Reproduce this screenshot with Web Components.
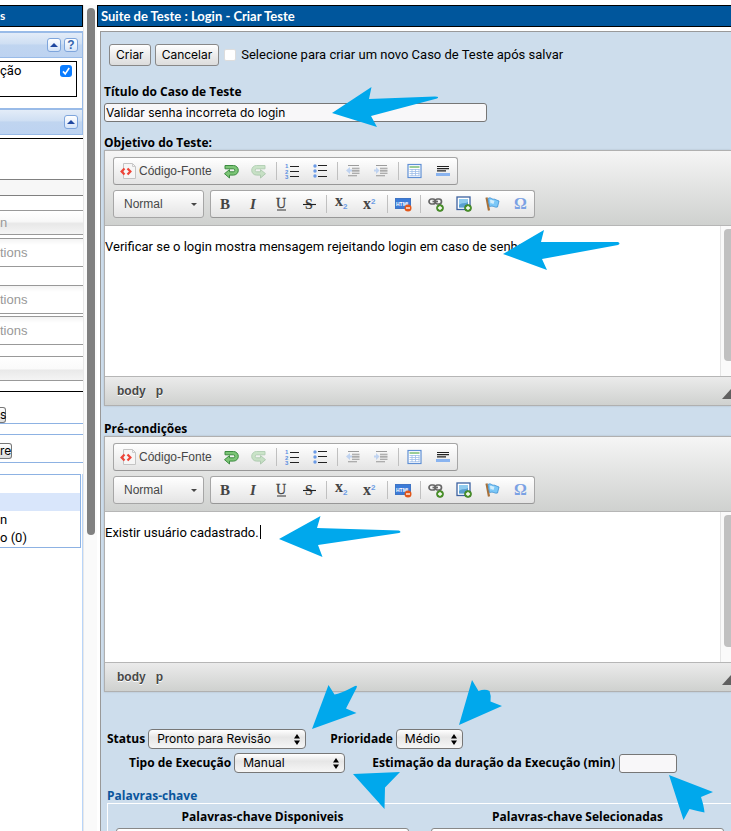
<!DOCTYPE html>
<html lang="pt-BR">
<head>
<meta charset="utf-8">
<title>Criar Teste</title>
<style>
html,body{margin:0;height:100%;overflow:hidden;background:#fff}
</style>
</head>
<body>
<test-app></test-app>

<template id="t-app">
<style>
:host{display:grid;grid-template-columns:83px 14px minmax(0,1fr);height:100vh;overflow:hidden;position:relative;
 font:13px/16px Roboto,"Open Sans",sans-serif;color:#000;background:#fff;box-sizing:border-box;padding-top:5px}
.scroll{background:#fafafa;border-left:1px solid #e8e8e8;padding:3px 2px 0 3px;box-sizing:border-box}
.thumb{height:527px;border-radius:4px;background:#808080}
main{min-width:0}
</style>
<side-panel></side-panel>
<div class="scroll"><div class="thumb"></div></div>
<main><case-form></case-form></main>
<arrow-layer></arrow-layer>
</template>

<template id="t-side">
<style>
:host{display:block;min-width:0;overflow:hidden}
*{box-sizing:border-box}
h2{margin:0;height:22px;background:#00569c;border:1px solid #000;border-left:0;color:#fff;font:bold 12px/20px Lato,sans-serif}
.bar{display:flex;justify-content:flex-end;align-items:center;gap:3px;height:27px;padding-right:4px;
 background:linear-gradient(#e3ecf8,#cfdff3 45%,#c0d5f0 50%,#bdd3f1);border-top:2px solid #99bbe8;border-bottom:1px solid #99bbe8;border-right:1px solid #99bbe8}
.bar.first{margin-top:4px}
.tool{width:14px;height:14px;padding:0;border:1px solid #7ea5dc;border-radius:3px;background:linear-gradient(#fff,#d5e4f8);display:grid;place-items:center;font:bold 12px/12px "Liberation Sans",sans-serif;color:#3464ad}
.box{height:50px;padding:3px 5px 0 0;border-right:1px solid #99bbe8}
.opt{display:flex;justify-content:space-between;height:36px;border:1px solid #000;border-left:0;padding:1px 4px 0 0}
.opt label{flex:1}
.opt input{appearance:none;width:12px;height:12px;margin:2px 0 0;border-radius:3px;background:#0a7cff}
.opt .c{display:grid}
.opt .c>*{grid-area:1/1}
.opt svg{width:12px;height:12px;margin-top:2px;pointer-events:none}
.rule{border-bottom:1px solid #808080}
.f{font:13px/28px "Liberation Sans",sans-serif;color:#999;border:1px solid #999;border-width:1px 0;background:linear-gradient(#f3f3f3,#fff 6px)}
.g{background:linear-gradient(#fff,#f8f8f8 45%,#e8e8e8 55%,#f4f4f4)}
.row{display:flex;align-items:center;border-bottom:1px solid #8db2e3}
.row button{width:12px;height:16px;border:1px solid #777;border-left:0;border-radius:0 3px 3px 0;background:linear-gradient(#fff,#ddd);font:12px/14px Inter,sans-serif;padding:0;color:#000}
.row .n{width:6px}
.tree{margin:11px 0 0;padding:18px 0 0;list-style:none;border:1px solid #8db2e3;border-left:0;margin-right:1px;height:74px}
.tree li{height:18px;line-height:18px}
.tree .sel{background:#d9e6fb}
.rest{border-right:1px solid #b9d5f9;height:100%}
</style>
<h2>s</h2>
<div class="bar first">
 <button class="tool" aria-label="Recolher"><svg width="8" height="4"><path d="M0 4L4 0l4 4z" fill="#2048a0"/></svg></button>
 <button class="tool" aria-label="Ajuda">?</button>
</div>
<div class="box"><div class="opt"><label for="upd">ção</label><span class="c"><input id="upd" type="checkbox" checked><svg viewBox="0 0 12 12"><path d="M3 6.4l2.2 2.5L9.2 3" fill="none" stroke="#fff" stroke-width="1.6"/></svg></span></div></div>
<div class="bar"><button class="tool" aria-label="Recolher"><svg width="8" height="4"><path d="M0 4L4 0l4 4z" fill="#2048a0"/></svg></button></div>
<div style="height:4px;border-bottom:1px solid #000"></div>
<div class="rule" style="height:41px"></div>
<div class="rule" style="height:16px;background:#f7f7f7"></div>
<div style="height:14px"></div>
<div class="f g" style="height:25px;line-height:23px">n</div>
<div class="f" style="height:29px;margin-top:3px">tions</div>
<div class="f" style="height:29px;margin-top:18px">tions</div>
<div class="f" style="height:29px;margin-top:2px">tions</div>
<div class="f" style="height:25px;margin-top:11px;background:linear-gradient(#fff,#fafafa 12px,#e9e9e9 13px,#f4f4f4)"></div>
<div style="height:11px;border-bottom:1px solid #000"></div>
<div class="row" style="height:32px;padding-top:14px"><button class="n">s</button></div>
<div style="height:11px;border-bottom:1px solid #8db2e3"></div>
<div class="row" style="height:28px;padding-top:4px"><button>re</button></div>
<div class="rest"><ul class="tree"><li class="sel"></li><li>n</li><li>o (0)</li></ul></div>
</template>

<template id="t-form">
<style>
:host{display:block}
*{box-sizing:border-box}
h1{margin:0;height:22px;background:#00569c;border:1px solid #000;border-right:0;color:#fff;font:bold 13px/20px Lato,sans-serif;padding-left:3px}
form{margin:4px 0 0 3px;background:#cdddec;border:1px solid #999;border-width:1px 0 0 1px;padding:12px 0 0 3px;height:900px}
label,.lab{font:bold 12px/16px "Open Sans",sans-serif}
.top{display:flex;align-items:center;gap:4px;padding-left:5px;height:22px}
.top button{height:22px;border:1px solid #888;border-radius:3px;background:linear-gradient(#fff,#ececec 50%,#dcdcdc);font:12px/18px Inter,sans-serif;padding:0 6px;color:#000}
.top input{appearance:none;width:12px;height:12px;margin:0 1px 0 1px;background:#fff;border:1px solid #ddd;border-radius:2px}
.top label{font:13px/16px Roboto,sans-serif}
.title{display:block;margin-top:18px}
.txt{height:19px;border:1px solid #767676;border-radius:3px;background:#f8f7f9;font:12px/15px Inter,sans-serif;padding:0 1px;margin:3px 0 0;color:#000}
#ti{display:block;width:383px}
.obj{display:block;margin:13px 0 -1px}
.pre{display:block;margin:15px 0 -1px}
.r{display:flex;align-items:center;gap:4px;height:24px}
.r1{margin:35px 0 0 3px}
.r2{padding-left:25px}
.gap{width:16px}
.r2 .gap{width:19px}
.r2 .txt{margin:0;width:58px}
h3{margin:13px 0 0 3px;font:bold 12px/16px "Open Sans",sans-serif;color:#0a559c}
.kw{border:1px solid #fff;border-right:0;margin-left:3px;margin-top:-1px;padding-left:8px;display:grid;grid-template-columns:293px 293px;gap:22px;height:90px}
.kw label{display:block;text-align:center;margin:5px 0 3px}
.kw select{display:block;width:100%;height:60px;border:1px solid #888;border-radius:3px;background:#fff}
</style>
<h1>Suite de Teste : Login - Criar Teste</h1>
<form>
 <div class="top"><button type="button">Criar</button><button type="button">Cancelar</button><input type="checkbox" id="novo"><label for="novo">Selecione para criar um novo Caso de Teste após salvar</label></div>
 <label class="title" for="ti">Título do Caso de Teste</label>
 <input class="txt" id="ti" type="text" value="Validar senha incorreta do login">
 <span class="lab obj">Objetivo do Teste:</span>
 <rich-editor label="Objetivo do Teste">Verificar se o login mostra mensagem rejeitando login em caso de senha incorreta.</rich-editor>
 <span class="lab pre">Pré-condições</span>
 <rich-editor label="Pré-condições" caret>Existir usuário cadastrado.</rich-editor>
 <div class="r r1"><select-field label="Status" value="Pronto para Revisão" style="--w:158px"></select-field><span class="gap"></span><select-field label="Prioridade" value="Médio" style="--w:67px"></select-field></div>
 <div class="r r2"><select-field label="Tipo de Execução" value="Manual" style="--w:111px"></select-field><span class="gap"></span><label for="est">Estimação da duração da Execução (min)</label><input class="txt" id="est" type="text"></div>
 <h3>Palavras-chave</h3>
 <div class="kw"><div><label for="kd">Palavras-chave Disponiveis</label><select id="kd" multiple></select></div><div><label for="ks">Palavras-chave Selecionadas</label><select id="ks" multiple></select></div></div>
</form>
</template>

<template id="t-select">
<style>
:host{display:flex;align-items:center;gap:3px}
label{font:bold 12px/16px "Open Sans",sans-serif}
.w{display:grid;width:var(--w)}
.w>*{grid-area:1/1}
select{appearance:none;width:100%;height:20px;box-sizing:border-box;margin:0;border:1px solid #777;border-radius:4px;background:linear-gradient(#fff,#e6e6e6 40%,#f6f6f6);padding:0 8px;font:12px/18px Inter,sans-serif;color:#000}
svg{justify-self:end;align-self:center;margin-right:6px;pointer-events:none}
</style>
<label for="s"></label><span class="w"><select id="s"><option></option></select><svg width="6" height="11"><path d="M0 4.5L3 0l3 4.5zM0 6.5L3 11l3-4.5z"/></svg></span>
</template>

<template id="t-editor">
<style>
:host{display:block;border:1px solid #b0b0b0;border-right:0;box-shadow:0 0 2px rgba(0,0,0,.15)}
*{box-sizing:border-box}
.bars{height:75px;padding:6px 0 0 8px;border-bottom:1px solid #b6b6b6;background:linear-gradient(#f5f5f5,#cfd1cf);display:flex;flex-direction:column;gap:5px;align-items:flex-start}
.line{display:flex;gap:6px}
.grp{display:flex;align-items:center;height:28px;border:1px solid #a6a6a6;border-bottom-color:#979797;border-radius:3px;background:linear-gradient(#fff,#e4e4e4);color:#444}
.grp.a{padding-right:1px}
.combo{appearance:none;width:91px;height:28px;border:1px solid #a6a6a6;border-radius:3px;background:linear-gradient(#fff,#e4e4e4);font:12px/26px "Liberation Sans",sans-serif;color:#474747;padding:0 10px;margin:0}
.cw{display:grid}
.cw>*{grid-area:1/1}
.cw svg{justify-self:end;align-self:center;margin-right:7px;pointer-events:none}
.text{height:151px;background:#fff;border-bottom:1px solid #b6b6b6;display:grid;grid-template-columns:minmax(0,1fr) 11px;overflow:hidden}
.ed{padding-top:13px;outline:0;font:13px/16px Roboto,sans-serif;white-space:nowrap;overflow:hidden}
:host([caret]) .ed::after{content:"";display:inline-block;width:1px;height:14px;margin-left:1px;background:#000;vertical-align:-2px}
.sb{background:#fafafa;border-left:1px solid #e5e5e5;padding:3px 0 0 3px}
.sb div{height:132px;border-radius:4px 0 0 4px;background:#c1c1c1}
.foot{height:28px;background:linear-gradient(#ebebeb,#cfd1cf);display:flex;align-items:center;font:bold 12px/16px "Liberation Sans",sans-serif;color:#484848;text-shadow:0 1px 0 #fff;padding-left:12px}
.foot span{margin-right:10px}
.foot svg{margin:6px 0 0 auto}
</style>
<div class="bars">
 <div class="line"><div class="grp a">
  <tool-icon name="source" text="Código-Fonte" style="--bw:103px"></tool-icon><tool-icon name="undo"></tool-icon><tool-icon name="redo"></tool-icon><tool-sep></tool-sep>
  <tool-icon name="ol"></tool-icon><tool-icon name="ul"></tool-icon><tool-sep></tool-sep>
  <tool-icon name="outdent"></tool-icon><tool-icon name="indent"></tool-icon><tool-sep></tool-sep>
  <tool-icon name="table"></tool-icon><tool-icon name="hr"></tool-icon></div></div>
 <div class="line"><span class="cw"><select class="combo" aria-label="Formatação"><option>Normal</option></select><svg width="6" height="3"><path d="M0 0h6L3 3z" fill="#474747"/></svg></span>
 <div class="grp"><tool-icon name="bold"></tool-icon><tool-icon name="italic"></tool-icon><tool-icon name="under"></tool-icon><tool-icon name="strike"></tool-icon><tool-sep></tool-sep>
  <tool-icon name="sub"></tool-icon><tool-icon name="sup"></tool-icon><tool-sep></tool-sep><tool-icon name="html"></tool-icon><tool-sep></tool-sep>
  <tool-icon name="link"></tool-icon><tool-icon name="image"></tool-icon><tool-icon name="flag"></tool-icon><tool-icon name="omega"></tool-icon></div></div>
</div>
<div class="text"><div class="ed" contenteditable="true" role="textbox"><slot></slot></div><div class="sb"><div></div></div></div>
<div class="foot"><span>body</span><span>p</span><svg width="9" height="10"><path d="M9 0v10H0z" fill="#606060"/></svg></div>
</template>

<script>
const tpl = id => document.getElementById(id).content.cloneNode(true);
const make = (tag, id, setup) => customElements.define(tag, class extends HTMLElement {
  constructor(){ super(); this.attachShadow({mode:'open'}).append(tpl(id)); }
  connectedCallback(){ setup && setup(this, this.shadowRoot); }
});

const S = 'font-family="Liberation Serif" font-weight="bold" fill="#444"';
const plus = '<circle cx="12" cy="12" r="3.5" fill="#4f9a2c" stroke="#2e6b16" stroke-width=".6"/><path d="M12 10v4M10 12h4" stroke="#fff" stroke-width="1.3"/>';
const U = '<path d="M2 2.5H10.500a4.800 4.800 0 0 1 0 9.600H6.500v2.900L1.500 10.700 6.500 6.600v2.200h3.800a1.500 1.500 0 0 0 0-3H2z" fill="#7cc576" stroke="#3c8b41" stroke-linejoin="round"/>';
const dent = d => `<g opacity=".5"><path d="M3 2.500h11M7 5.200h7.500M7 10.200h7.500M3 12.800h9" stroke="#444" stroke-width="1.100"/><path d="M7 7.700h7.500" stroke="#666" stroke-width="2"/><path d="${d}" fill="#8fb6f0"/></g>`;
const ICONS = {
  source:'<path d="M3.500 .5h9l3 3v12h-12z" fill="#f6f6f6" stroke="#c4c4c4"/><path d="M12.500 .5v3h3" fill="none" stroke="#ccc"/><path d="M4.500 5.500L1.600 8.500l2.900 3M7.500 5.500l2.900 3-2.900 3" fill="none" stroke="#ee4438" stroke-width="2.200"/>',
  undo:U, redo:`<g transform="matrix(-1 0 0 1 16 0)" opacity=".35">${U}</g>`,
  ol:`<g font-family="Liberation Sans" font-weight="bold" font-size="6" fill="#5b8fe0"><text x="1" y="5">1</text><text x="1" y="10.500">2</text><text x="1" y="16">3</text></g><path d="M6 3.500h9M6 8.500h9M6 13.500h9" stroke="#222" stroke-width="1.100"/>`,
  ul:'<g fill="#6a9ae6"><circle cx="3" cy="3" r="1.700"/><circle cx="3" cy="8" r="1.700"/><circle cx="3" cy="13" r="1.700"/></g><path d="M6 2.500h9M6 7.500h9M6 13.500h9" stroke="#222" stroke-width="1.100"/>',
  outdent:dent('M1 7.500L5 4v2.500h2v2H5V11z'), indent:dent('M6.500 7.500L3 4v2.500H1v2h2V11z'),
  table:'<rect x="2" y="1.500" width="13" height="13" fill="#fff" stroke="#5f8fd4" stroke-width="1.200"/><path d="M3.500 4h10" stroke="#63b25e" stroke-width="1.300"/><path d="M3.500 6.500h10M3.500 8.500h10M3.500 10.500h10M3.500 12.700h10M6 6v7M9.500 6v7M13 6v7" stroke="#9dbce8" stroke-width=".8"/>',
  hr:'<path d="M3 3.500h12M3 5.700h12M3 7.800h9" stroke="#222" stroke-width="1.200"/><rect x="2" y="10" width="14" height="3" fill="#8ab4f0"/>',
  bold:`<text x="3" y="13" font-size="15" ${S}>B</text>`,
  italic:`<text x="5" y="13" font-size="15" font-style="italic" ${S}>I</text>`,
  under:'<text x="3" y="12" font-size="14" font-family="Liberation Serif" fill="#444" stroke="#444" stroke-width=".3">U</text><path d="M4 14h9" stroke="#333"/>',
  strike:`<text x="4" y="13" font-size="14" ${S}>S</text><path d="M2 8.500h13" stroke="#222" stroke-width="1.100"/>`,
  sub:`<text x="1" y="10" font-size="16" ${S}>x</text><text x="9" y="13" font-size="8" font-family="Liberation Sans" font-weight="bold" fill="#6b9be4">2</text>`,
  sup:`<text x="1" y="13" font-size="16" ${S}>x</text><text x="9" y="8" font-size="8" font-family="Liberation Sans" font-weight="bold" fill="#6b9be4">2</text>`,
  html:'<rect x=".5" y="2.500" width="15" height="10" fill="#3b7bd8" stroke="#3f74c4"/><text x="1" y="9.500" font-size="5" font-weight="bold" font-family="Liberation Sans" fill="#fff">HTML</text><circle cx="13" cy="12" r="3.500" fill="#e2571a"/><path d="M11 12h4" stroke="#fff" stroke-width="1.300"/>',
  link:`<g fill="none" stroke="#666" stroke-width="1.700"><rect x="1" y="3" width="6.500" height="5" rx="2.500"/><rect x="7" y="3" width="6.500" height="5" rx="2.500"/><path d="M4.500 5.500h5.500"/></g>${plus}`,
  image:`<rect x="1" y="1" width="13" height="12.500" fill="#fff" stroke="#3c62a0" stroke-width="1.300"/><rect x="3" y="3" width="9" height="8.500" fill="#8fcbee"/><path d="M3 9c4-3 6-1 9-3v5.500H3z" fill="#5a9fd0"/>${plus}`,
  flag:'<path d="M2.500 1.500l2.500 13" stroke="#a8713a" stroke-width="2.200"/><path d="M4 2.500c3-2 4 1.500 6 .5l5 2-1.500 6c-3 1-4-2-8-.5z" fill="#7cc8f7" stroke="#3e8fd2" stroke-width=".8"/><path d="M6 4c2-.8 3 1 4.500 .8L9.500 8C8 8 8 7 6.500 7.500z" fill="#d3eefc"/>',
  omega:'<text x="2" y="13" font-size="16" font-family="Liberation Serif" font-weight="bold" fill="#7ba2e4">Ω</text>'
};
customElements.define('tool-icon', class extends HTMLElement {
  connectedCallback(){
    const t = this.getAttribute('text') || '';
    this.attachShadow({mode:'open'}).innerHTML = `<style>:host{display:block}button{width:var(--bw,28px);height:26px;padding:0 6px;margin:0;border:0;background:none;display:flex;align-items:center;gap:3px;font:12px/16px "Liberation Sans",sans-serif;color:#474747;white-space:nowrap}svg{width:16px;height:16px;flex:none;overflow:visible}</style>
    <button type="button" aria-label="${t || this.getAttribute('name')}"><svg viewBox="0 0 16 16">${ICONS[this.getAttribute('name')]}</svg>${t}</button>`;
  }
});
customElements.define('tool-sep', class extends HTMLElement {
  connectedCallback(){ this.attachShadow({mode:'open'}).innerHTML = '<style>:host{display:block;width:1px;height:18px;margin:0 1px 0 3px;background:#c0c0c0}</style>'; }
});
customElements.define('arrow-layer', class extends HTMLElement {
  connectedCallback(){ this.attachShadow({mode:'open'}).innerHTML = `<style>:host{position:absolute;inset:0;pointer-events:none}svg{display:block}</style>
  <svg width="731" height="831" fill="#00a8ec" aria-hidden="true">
  <path d="M332 113L371.500 87 369 99 435 96.500Q440 96.500 437 98.500L371 116 377 127z"/>
  <path d="M503 254L544 230 541 242H618Q621 243.500 618 245L542 259 547 270z"/>
  <path d="M279 539L320.500 516 317 528 399 530.500Q402 532 399 533L318 545 322.500 557z"/>
  <path d="M312 729L328.500 685 334.500 694.500Q340 694 355 686 358 685 356.500 688L346 708.500 356.500 713z"/>
  <path d="M459 725L472 680 478.500 691Q485 688.500 489.500 691 491.500 696 490.500 701.500L502 706z"/>
  <path d="M353 774L400 772 385 787.500 384.500 809z"/>
  <path d="M669 775L713 792 701 797Q704 806 704.500 812.500 698 811 689.500 809L683.500 820z"/></svg>`; }
});
make('select-field','t-select',(h,r)=>{ r.querySelector('label').textContent=h.getAttribute('label'); r.querySelector('option').textContent=h.getAttribute('value'); });
make('rich-editor','t-editor',(h,r)=>r.querySelector('.ed').setAttribute('aria-label',h.getAttribute('label')));
make('side-panel','t-side');
make('case-form','t-form');
make('test-app','t-app');
</script>
</body>
</html>
